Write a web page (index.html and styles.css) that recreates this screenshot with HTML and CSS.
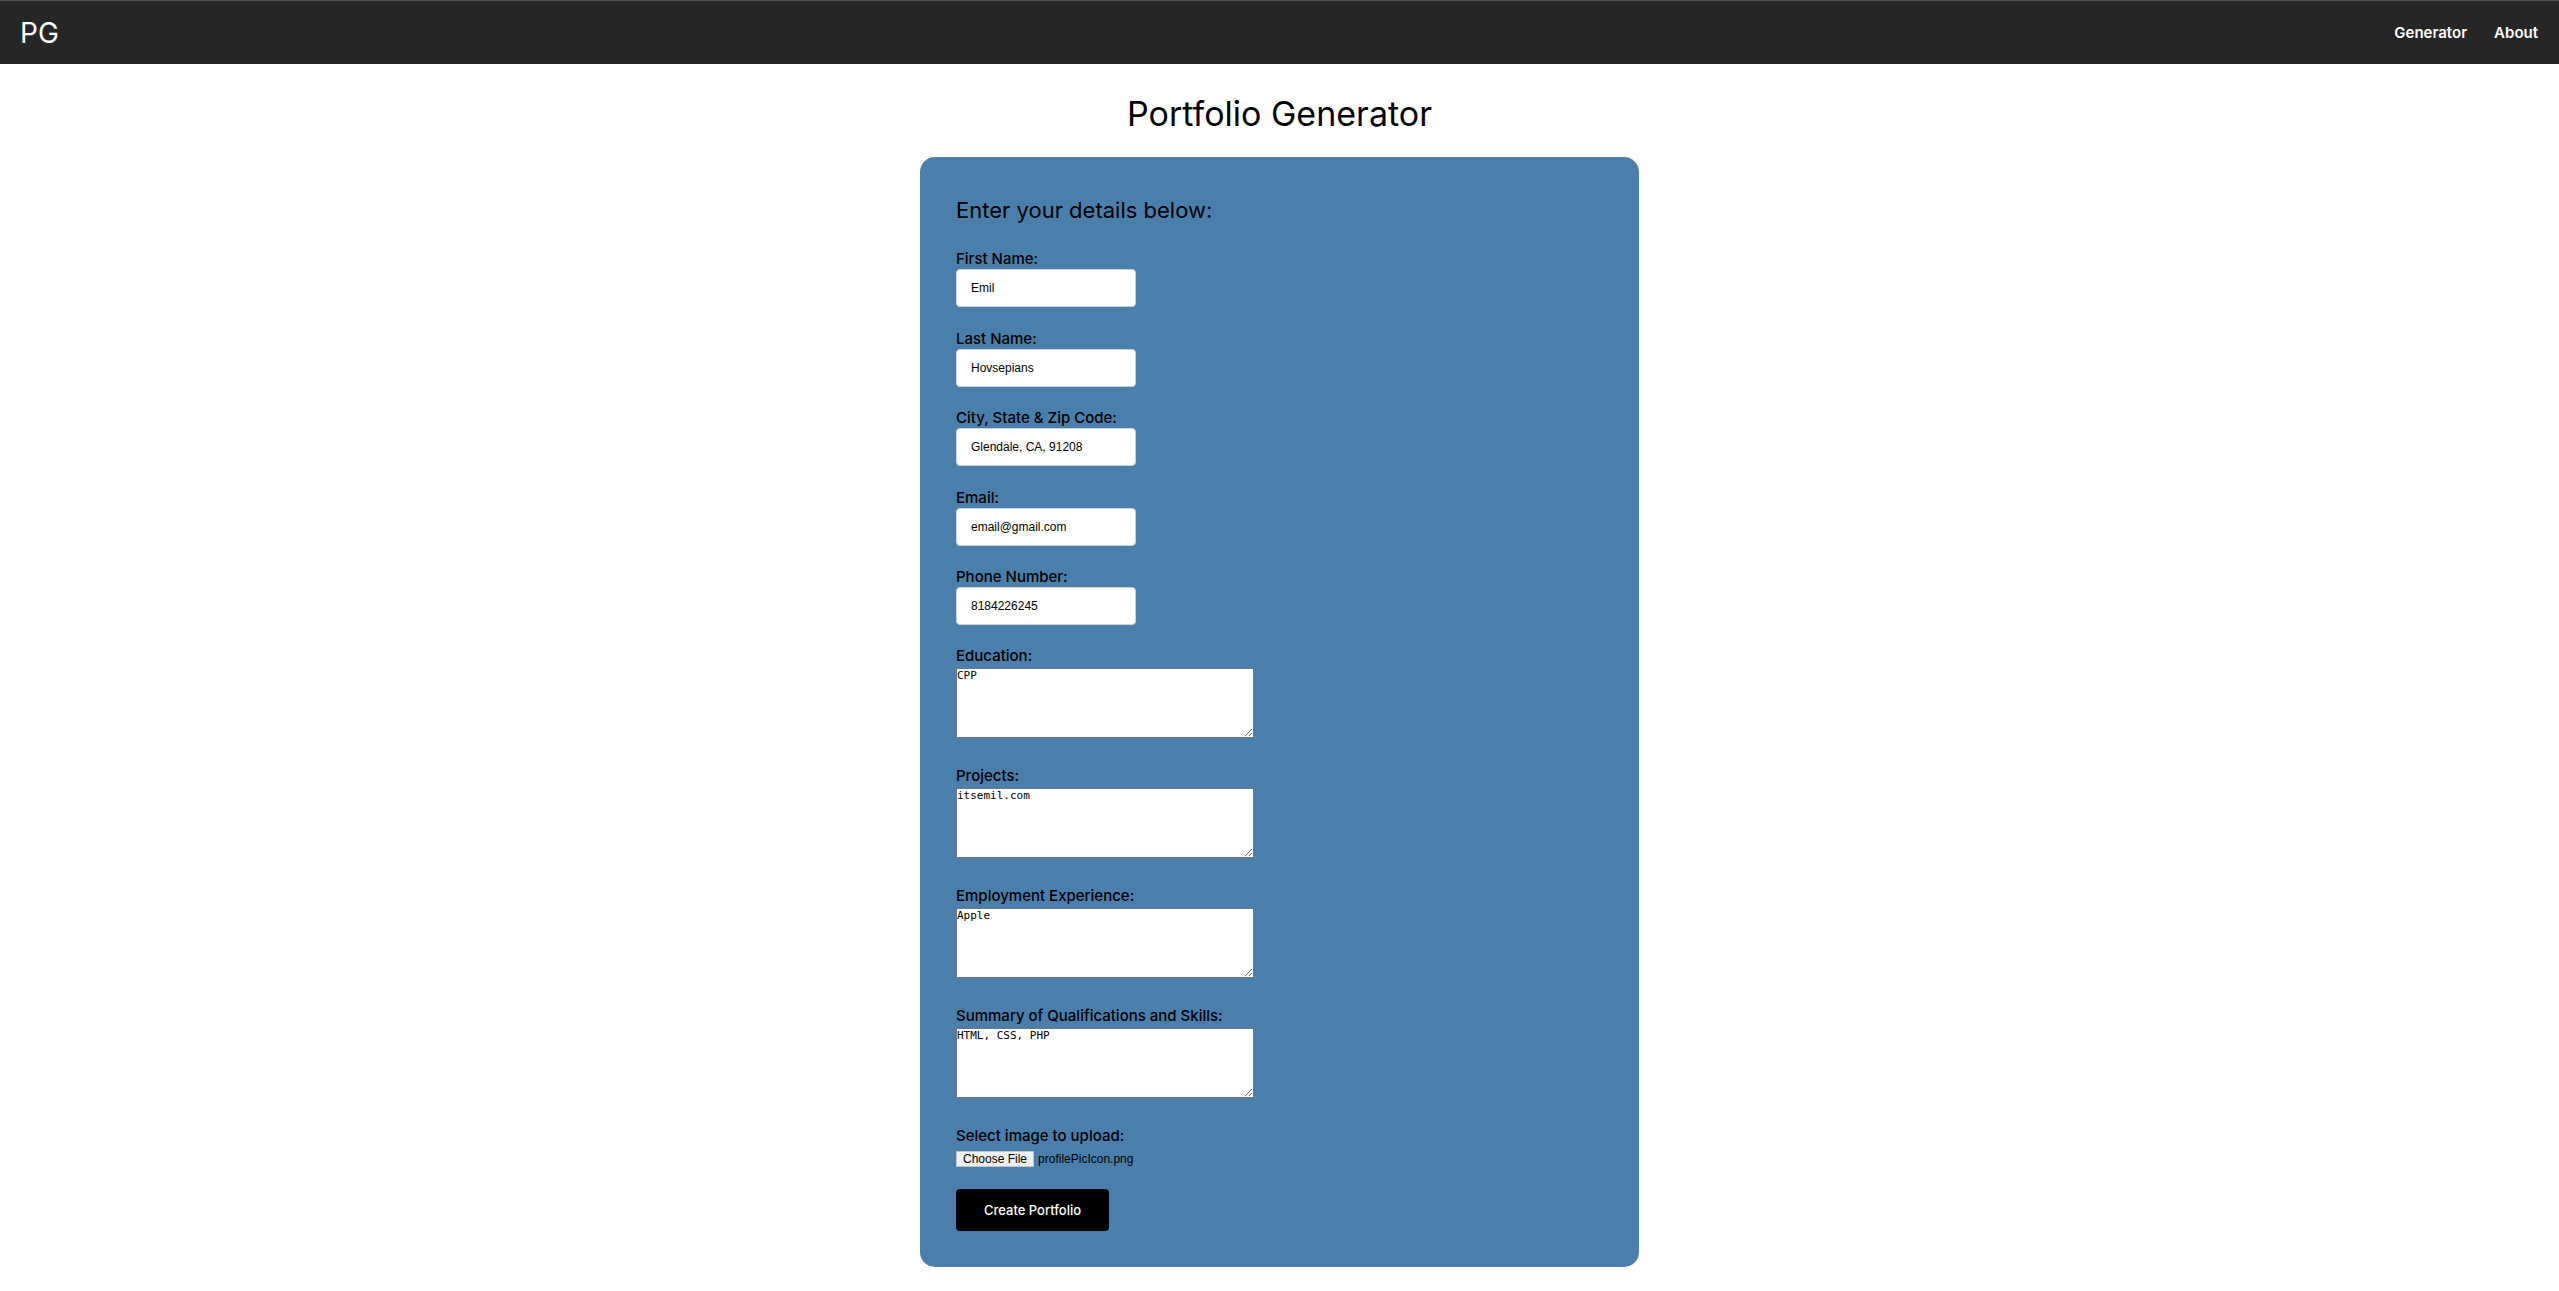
FILE: index.html
```html
<!DOCTYPE html>
<html lang="en">
<head>
<meta charset="utf-8">
<title>Portfolio Generator</title>
<link rel="stylesheet" href="styles.css">
</head>
<body>
<nav class="nav">
  <a class="brand" href="#">PG</a>
  <div class="links">
    <a href="#">Generator</a>
    <a href="#">About</a>
  </div>
</nav>
<main class="main">
  <h1 class="title">Portfolio Generator</h1>
  <form class="card">
    <h2 class="card-heading">Enter your details below:</h2>

    <div class="field">
      <label class="label" for="fn">First Name:</label>
      <input class="text" id="fn" type="text" value="Emil">
    </div>
    <div class="field">
      <label class="label" for="ln">Last Name:</label>
      <input class="text" id="ln" type="text" value="Hovsepians">
    </div>
    <div class="field">
      <label class="label" for="city">City, State &amp; Zip Code:</label>
      <input class="text" id="city" type="text" value="Glendale, CA, 91208">
    </div>
    <div class="field">
      <label class="label" for="em">Email:</label>
      <input class="text" id="em" type="text" value="email@gmail.com">
    </div>
    <div class="field field-last-input">
      <label class="label" for="ph">Phone Number:</label>
      <input class="text" id="ph" type="text" value="8184226245">
    </div>

    <div class="field field-area">
      <label class="label" for="ed">Education:</label>
      <textarea class="area" id="ed">CPP</textarea>
    </div>
    <div class="field field-area">
      <label class="label" for="pr">Projects:</label>
      <textarea class="area" id="pr">itsemil.com</textarea>
    </div>
    <div class="field field-area">
      <label class="label" for="emp">Employment Experience:</label>
      <textarea class="area" id="emp">Apple</textarea>
    </div>
    <div class="field field-area">
      <label class="label" for="sum">Summary of Qualifications and Skills:</label>
      <textarea class="area" id="sum">HTML, CSS, PHP</textarea>
    </div>

    <div class="field field-file">
      <span class="label">Select image to upload:</span>
      <div class="file-row">
        <span class="file-btn">Choose File</span>
        <span class="file-name">profilePicIcon.png</span>
      </div>
    </div>

    <button class="submit" type="button">Create Portfolio</button>
  </form>
</main>
</body>
</html>
```

FILE: styles.css
```css
html, body {
  margin: 0;
  padding: 0;
  background: #ffffff;
}

body {
  font-family: Inter, "Open Sans", Arial, sans-serif;
  color: #000;
}

.nav {
  height: 63px;
  border-top: 1px solid #4d4d4d;
  background: #262626;
  display: flex;
  align-items: center;
  justify-content: space-between;
  padding: 0 21px 0 20px;
}

.brand {
  color: #fff;
  text-decoration: none;
  font-size: 28px;
  font-weight: 400;
  line-height: 34px;
}

.links {
  display: flex;
  gap: 27px;
}

.links a {
  color: #fff;
  text-decoration: none;
  font-size: 15px;
  font-weight: 600;
  line-height: 20px;
}

.main {
  display: flex;
  flex-direction: column;
  align-items: center;
}

.title {
  margin: 30px 0 23px;
  font-size: 34px;
  font-weight: 400;
  line-height: 40px;
}

.card {
  box-sizing: border-box;
  width: 719px;
  background: #4a7fab;
  border-radius: 15px;
  padding: 39px 36px 36px;
  display: flex;
  flex-direction: column;
  align-items: flex-start;
  margin-bottom: 25px;
}

.card-heading {
  margin: 0 0 25px;
  font-size: 22px;
  font-weight: 400;
  line-height: 28px;
}

.field {
  display: flex;
  flex-direction: column;
  align-items: flex-start;
  margin-bottom: 21.5px;
}

.field-last-input {
  margin-bottom: 20.5px;
}

.label {
  font-size: 15px;
  font-weight: 500;
  line-height: 20px;
}

.text {
  box-sizing: border-box;
  width: 180px;
  height: 38px;
  margin: 0;
  border: 1px solid #d0d0d0;
  border-radius: 4px;
  padding: 0 14px;
  background: #fff;
  font-family: "Liberation Sans", Arial, sans-serif;
  font-size: 12px;
  color: #000;
  outline: none;
}

.field-area {
  margin-bottom: 27.5px;
}

.area {
  box-sizing: border-box;
  width: 298px;
  height: 70px;
  margin: 2.5px 0 0;
  border: 1px solid #767676;
  padding: 0;
  background: #fff;
  font-family: "DejaVu Sans Mono", "Liberation Mono", monospace;
  font-size: 11px;
  color: #000;
  display: block;
}

.field-file {
  margin-bottom: 22px;
}

.file-row {
  display: flex;
  align-items: center;
  gap: 4px;
  margin-top: 5px;
  font-family: "Liberation Sans", Arial, sans-serif;
  font-size: 12px;
}

.file-btn {
  box-sizing: border-box;
  height: 16px;
  line-height: 14px;
  padding: 0 6px;
  background: #efefef;
  border: 1px solid #c4c4c4;
  color: #000;
}

.file-name {
  color: #000;
}

.submit {
  box-sizing: border-box;
  width: 153px;
  height: 42px;
  border: none;
  border-radius: 4px;
  background: #000;
  color: #fff;
  font-family: Inter, "Open Sans", Arial, sans-serif;
  font-size: 13px;
  font-weight: 500;
  padding: 0;
}
```
